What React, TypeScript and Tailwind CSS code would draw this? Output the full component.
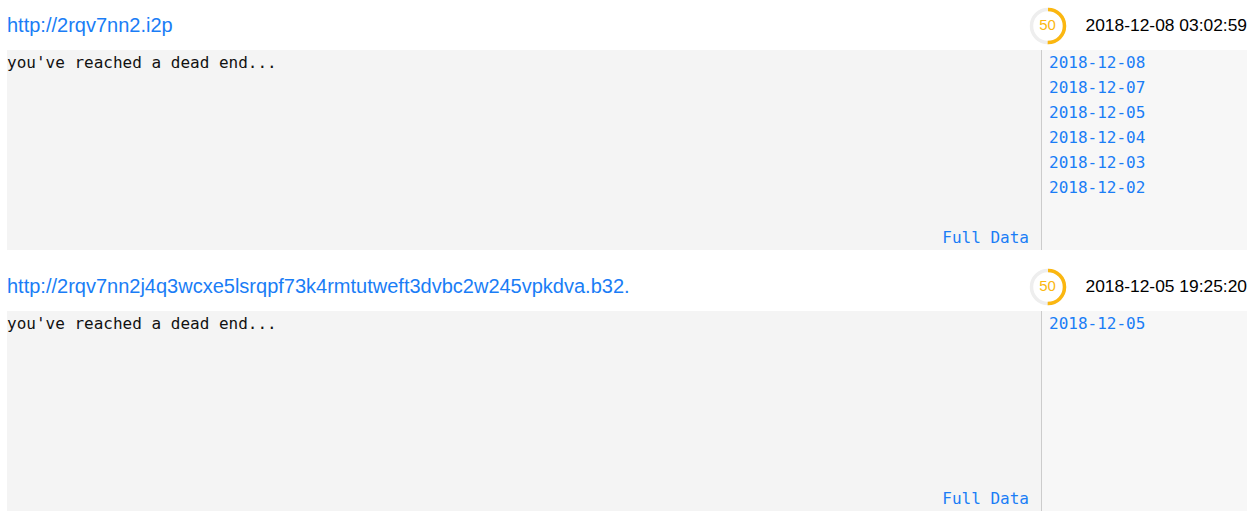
const ENTRIES = [
  {
    url: "http://2rqv7nn2.i2p",
    score: 50,
    seen: "2018-12-08 03:02:59",
    body: "you've reached a dead end...",
    dates: ["2018-12-08", "2018-12-07", "2018-12-05", "2018-12-04", "2018-12-03", "2018-12-02"],
  },
  {
    url: "http://2rqv7nn2j4q3wcxe5lsrqpf73k4rmtutweft3dvbc2w245vpkdva.b32.",
    score: 50,
    seen: "2018-12-05 19:25:20",
    body: "you've reached a dead end...",
    dates: ["2018-12-05"],
  },
];

function Score({ value }: { value: number }) {
  const r = 16.5;
  const c = 2 * Math.PI * r;
  return (
    <div className="relative w-[38px] h-[38px]">
      <svg width="38" height="38" viewBox="0 0 38 38" className="-rotate-90">
        <circle cx="19" cy="19" r={r} fill="none" stroke="#eeeeee" strokeWidth="3.5" />
        <circle cx="19" cy="19" r={r} fill="none" stroke="#fbb710" strokeWidth="3.5" strokeDasharray={`${(c * value) / 100} ${c}`} />
      </svg>
      <span className="absolute inset-0 flex items-center justify-center text-[15px] text-[#fbb710]">{value}</span>
    </div>
  );
}

export default function App() {
  return (
    <div className="w-[1254px] h-[514px] bg-white px-[7px] font-['Liberation_Sans',Arial,sans-serif] overflow-hidden">
      {ENTRIES.map((e, i) => (
        <div key={i} className={i > 0 ? "mt-[11px]" : ""}>
          <div className="h-[50px] flex items-center">
            <a href="#" className="flex-1 text-[20px] text-[#1a7df6] truncate">{e.url}</a>
            <div className="mr-[19px] ml-[5px] pt-[1px]">
              <Score value={e.score} />
            </div>
            <span className="text-[17.4px] text-black">{e.seen}</span>
          </div>
          <div className="h-[200px] flex font-['DejaVu_Sans_Mono',monospace] text-[16px] leading-[25px]">
            <div className="flex-1 bg-[#f4f4f4] flex flex-col">
              <p className="flex-1 text-[#111]">{e.body}</p>
              <a href="#" className="self-end pr-[12px] text-[#1a7df6]">Full Data</a>
            </div>
            <div className="w-[206px] bg-[#f7f7f7] border-l border-[#cccccc] pl-[7px]">
              {e.dates.map((d) => (
                <a key={d} href="#" className="block text-[#1a7df6]">{d}</a>
              ))}
            </div>
          </div>
        </div>
      ))}
    </div>
  );
}
